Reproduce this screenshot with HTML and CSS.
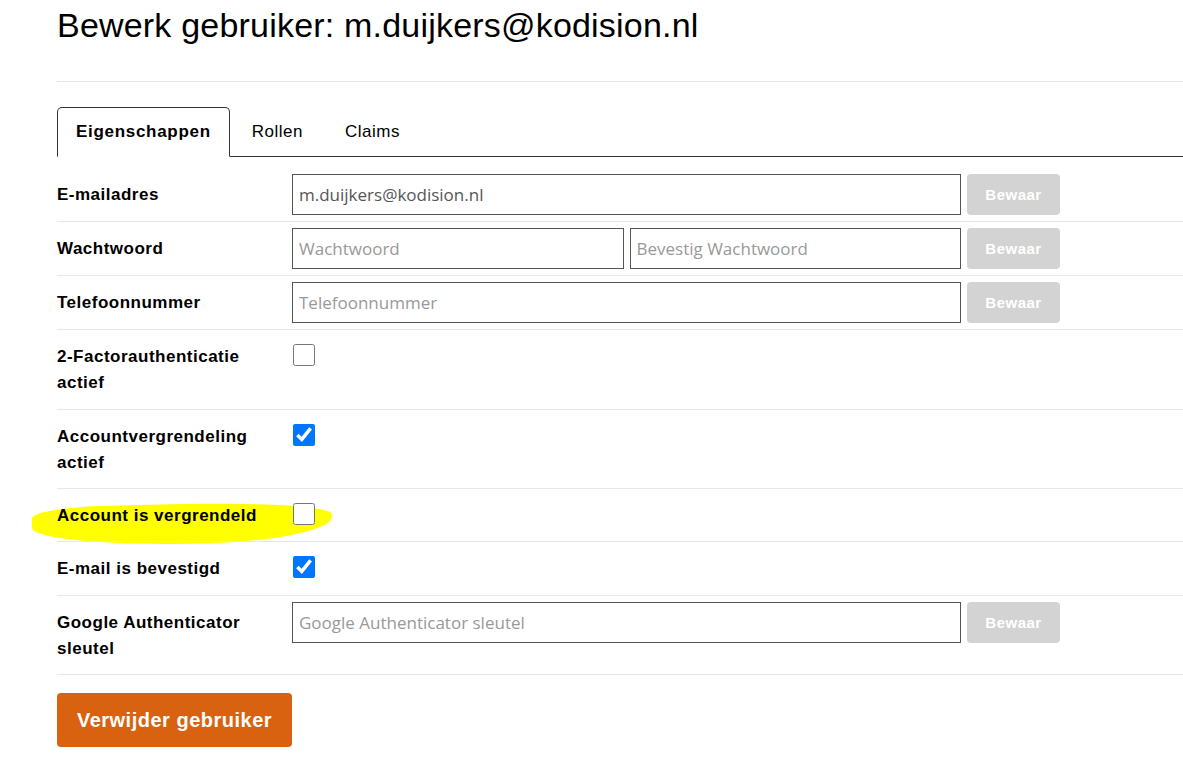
FILE: index.html
```html
<!DOCTYPE html>
<html lang="nl">
<head>
    <meta charset="UTF-8">
    <title>Bewerk gebruiker</title>
    <link rel="stylesheet" href="styles.css">
</head>
<body>
    <div class="container">
        <h1>Bewerk gebruiker: m.duijkers@kodision.nl</h1>
        <hr>

        <div class="tabs">
            <button class="tab active">Eigenschappen</button>
            <button class="tab">Rollen</button>
            <button class="tab">Claims</button>
        </div>

        <div class="props">
            <div class="row">
                <div class="label">E-mailadres</div>
                <div class="field">
                    <input type="text" value="m.duijkers@kodision.nl">
                    <button class="save">Bewaar</button>
                </div>
            </div>
            <div class="row">
                <div class="label">Wachtwoord</div>
                <div class="field">
                    <input type="password" placeholder="Wachtwoord">
                    <input type="password" placeholder="Bevestig Wachtwoord">
                    <button class="save">Bewaar</button>
                </div>
            </div>
            <div class="row">
                <div class="label">Telefoonnummer</div>
                <div class="field">
                    <input type="text" placeholder="Telefoonnummer">
                    <button class="save">Bewaar</button>
                </div>
            </div>
            <div class="row">
                <div class="label">2-Factorauthenticatie<br>actief</div>
                <div class="field">
                    <input type="checkbox" class="check">
                </div>
            </div>
            <div class="row">
                <div class="label">Accountvergrendeling<br>actief</div>
                <div class="field">
                    <input type="checkbox" class="check" checked>
                </div>
            </div>
            <div class="row">
                <div class="label marked">Account is vergrendeld</div>
                <div class="field">
                    <input type="checkbox" class="check">
                </div>
            </div>
            <div class="row">
                <div class="label">E-mail is bevestigd</div>
                <div class="field">
                    <input type="checkbox" class="check" checked>
                </div>
            </div>
            <div class="row">
                <div class="label">Google Authenticator<br>sleutel</div>
                <div class="field">
                    <input type="text" placeholder="Google Authenticator sleutel">
                    <button class="save">Bewaar</button>
                </div>
            </div>
        </div>

        <button class="delete">Verwijder gebruiker</button>
    </div>
</body>
</html>
```

FILE: styles.css
```css
* {
    box-sizing: border-box;
}

body {
    margin: 0;
    font-family: 'Liberation Sans', Arial, sans-serif;
    color: #000;
    background: #fff;
    overflow: hidden;
}

.container {
    padding-left: 57px;
}

h1 {
    margin: 6px 0 0;
    font-size: 34px;
    font-weight: normal;
    letter-spacing: 0.2px;
    line-height: 39px;
}

hr {
    margin: 36px 0 0;
    border: none;
    border-top: 1px solid #e5e5e5;
}

.tabs {
    display: flex;
    margin-top: 25px;
    border-bottom: 1px solid #333;
}

.tab {
    padding: 0 19px;
    height: 50px;
    margin-right: 2px;
    margin-bottom: -1px;
    font-family: inherit;
    font-size: 17px;
    letter-spacing: 0.5px;
    background: none;
    border: 1px solid transparent;
    border-radius: 5px 5px 0 0;
    color: #000;
}

.tab.active {
    padding: 0 18px;
    font-weight: bold;
    letter-spacing: 0.7px;
    border-color: #333;
    border-bottom-color: #fff;
    background: #fff;
}

.props {
    margin-top: 11px;
}

.row {
    display: flex;
    padding: 6px 0;
    border-bottom: 1px solid #e8e8e8;
}

.label {
    width: 235px;
    padding: 8px 0 6px;
    font-size: 17px;
    font-weight: bold;
    letter-spacing: 0.5px;
    line-height: 26.3px;
}

.marked {
    position: relative;
}

.marked::before {
    content: "";
    position: absolute;
    left: -25px;
    top: 9px;
    width: 300px;
    height: 40px;
    background: #ffff00;
    border-radius: 30% 70% 55% 75% / 35% 45% 75% 65%;
    transform: rotate(-1.5deg);
    z-index: -1;
}

.field {
    display: flex;
    align-items: flex-start;
    gap: 6px;
    width: 768px;
}

.field input[type="text"],
.field input[type="password"] {
    flex: 1;
    min-width: 0;
    height: 41px;
    padding: 0 6px;
    border: 1px solid #565650;
    border-radius: 0;
    font-family: 'Open Sans', sans-serif;
    font-size: 17px;
    color: #555;
}

.field input::placeholder {
    color: #999;
}

.save {
    width: 93px;
    height: 41px;
    border: none;
    border-radius: 4px;
    background: #d3d3d3;
    color: #fff;
    font-family: inherit;
    font-size: 15px;
    font-weight: bold;
    letter-spacing: 0.5px;
}

.check {
    width: 22px;
    height: 22px;
    margin: 8px 0 0 1px;
    accent-color: #0075ff;
}

.delete {
    margin-top: 18px;
    width: 235px;
    height: 54px;
    border: none;
    border-radius: 4px;
    background: #d96210;
    color: #fff;
    font-family: inherit;
    font-size: 20px;
    font-weight: bold;
    letter-spacing: 0.5px;
}
```
